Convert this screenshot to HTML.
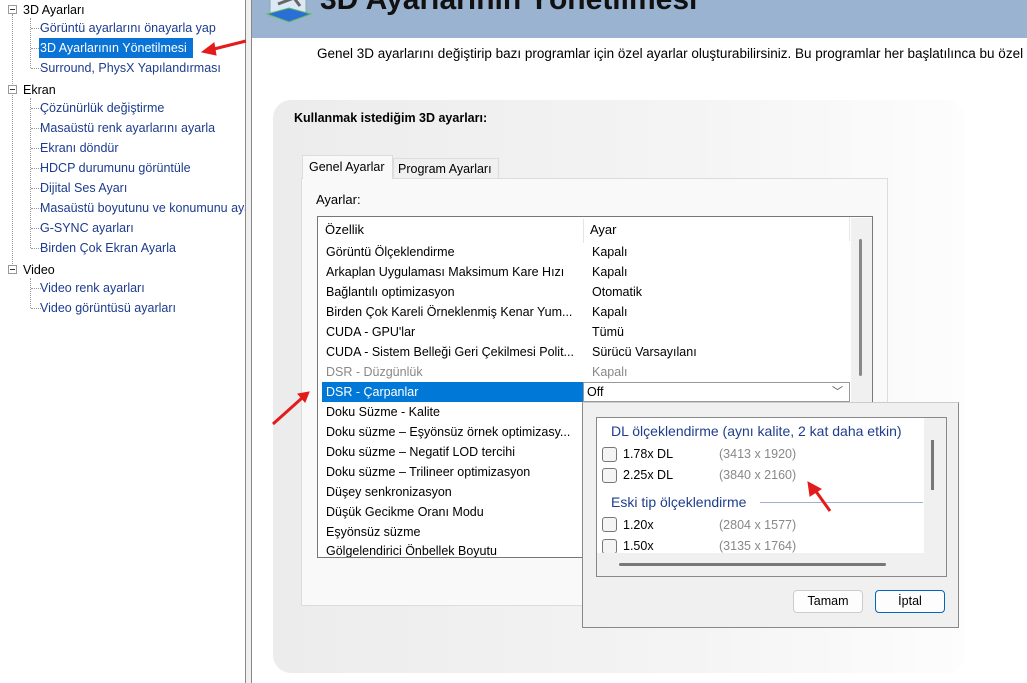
<!DOCTYPE html>
<html><head><meta charset="utf-8"><style>
*{margin:0;padding:0;box-sizing:border-box}
body{width:1027px;height:683px;overflow:hidden;background:#fff;font-family:"Liberation Sans","DejaVu Sans",sans-serif;font-size:12.5px;color:#000;position:relative}
.a{position:absolute;white-space:nowrap}
.tree .a{font-size:12.5px;line-height:20px}
.ch{color:#1d3c8f}
.dot{position:absolute;border-left:1px dotted #999}
.hd{position:absolute;border-top:1px dotted #999;width:10px}
.box{position:absolute;width:9px;height:9px;border:1px solid #999;background:#fff}
.box:after{content:"";position:absolute;left:1px;top:3px;width:5px;border-top:1px solid #333}
.row{position:absolute;left:326px;height:20px;line-height:20px;white-space:nowrap}
.cb{position:absolute;width:15px;height:15px;border:1px solid #777;border-radius:3px;background:#f4f4f4}
.res{color:#888;font-size:12.5px}
</style></head><body>
<div class="tree">
<div class="dot" style="left:12px;top:14px;height:256px"></div>
<div class="dot" style="left:30px;top:18px;height:50px"></div>
<div class="dot" style="left:30px;top:98px;height:150px"></div>
<div class="dot" style="left:30px;top:278px;height:30px"></div>
<div class="box" style="left:8px;top:5px"></div>
<div class="box" style="left:8px;top:85px"></div>
<div class="box" style="left:8px;top:265px"></div>
<div class="a" style="left:23px;top:0">3D Ayarları</div>
<div class="a" style="left:23px;top:80px">Ekran</div>
<div class="a" style="left:23px;top:260px">Video</div>
<div class="hd" style="left:31px;top:28px"></div><div class="a ch" style="left:40px;top:18px">Görüntü ayarlarını önayarla yap</div>
<div class="hd" style="left:31px;top:48px"></div><div class="a" style="left:39px;top:38px;background:#0a74d6;color:#fff;padding:0 3px 0 1px;width:154px">3D Ayarlarının Yönetilmesi</div>
<div class="hd" style="left:31px;top:68px"></div><div class="a ch" style="left:40px;top:58px">Surround, PhysX Yapılandırması</div>
<div class="hd" style="left:31px;top:108px"></div><div class="a ch" style="left:40px;top:98px">Çözünürlük değiştirme</div>
<div class="hd" style="left:31px;top:128px"></div><div class="a ch" style="left:40px;top:118px">Masaüstü renk ayarlarını ayarla</div>
<div class="hd" style="left:31px;top:148px"></div><div class="a ch" style="left:40px;top:138px">Ekranı döndür</div>
<div class="hd" style="left:31px;top:168px"></div><div class="a ch" style="left:40px;top:158px">HDCP durumunu görüntüle</div>
<div class="hd" style="left:31px;top:188px"></div><div class="a ch" style="left:40px;top:178px">Dijital Ses Ayarı</div>
<div class="hd" style="left:31px;top:208px"></div><div class="a ch" style="left:40px;top:198px;width:206px;overflow:hidden">Masaüstü boyutunu ve konumunu ayarla</div>
<div class="hd" style="left:31px;top:228px"></div><div class="a ch" style="left:40px;top:218px">G-SYNC ayarları</div>
<div class="hd" style="left:31px;top:248px"></div><div class="a ch" style="left:40px;top:238px">Birden Çok Ekran Ayarla</div>
<div class="hd" style="left:31px;top:288px"></div><div class="a ch" style="left:40px;top:278px">Video renk ayarları</div>
<div class="hd" style="left:31px;top:308px"></div><div class="a ch" style="left:40px;top:298px">Video görüntüsü ayarları</div>
</div>
<div class="a" style="left:245px;top:0;width:7px;height:683px;border-left:1px solid #888;border-right:1px solid #888;background:#f0f0f0"></div>
<div class="a" style="left:252px;top:0;width:775px;height:38px;background:#9ab3d1;overflow:hidden">
 <svg style="position:absolute;left:12px;top:-6px" width="50" height="30"><rect x="6" y="0" width="36" height="22" fill="#dde8f5" stroke="#8aa" /><polygon points="3,20 25,28 47,20 25,14" fill="#2a6fd6" stroke="#6b6"/><path d="M14 10 L30 4 L36 12" stroke="#666" stroke-width="3" fill="none"/></svg>
 <div class="a" style="left:68px;top:-17px;font-size:30px;font-weight:bold;color:#111">3D Ayarlarının Yönetilmesi</div>
</div>
<div class="a" style="left:317px;top:46px;font-size:13.5px">Genel 3D ayarlarını değiştirip bazı programlar için özel ayarlar oluşturabilirsiniz. Bu programlar her başlatılınca bu özel ayarlar</div>
<div class="a" style="left:273px;top:100px;width:692px;height:573px;border-radius:18px;background:linear-gradient(90deg,#ececec,#f4f4f4 60%,#fdfdfd)"></div>
<div class="a" style="left:294px;top:111px;font-weight:bold;font-size:12.5px">Kullanmak istediğim 3D ayarları:</div>
<div class="a" style="left:301px;top:178px;width:587px;height:428px;background:#f9f9f9;border:1px solid #dcdcdc"></div>
<div class="a" style="left:302px;top:155px;width:91px;height:24px;background:#f9f9f9;border:1px solid #dcdcdc;border-bottom:none;line-height:22px;padding-left:6px">Genel Ayarlar</div>
<div class="a" style="left:393px;top:158px;width:106px;height:20px;background:#f0f0f0;border:1px solid #dcdcdc;border-bottom:none;line-height:20px;padding-left:4px">Program Ayarları</div>
<div class="a" style="left:316px;top:192px;font-size:13px">Ayarlar:</div>
<div class="a" style="left:317px;top:216px;width:556px;height:342px;background:#fff;border:1px solid #777"></div>
<div class="a" style="left:325px;top:222px;font-size:13px">Özellik</div>
<div class="a" style="left:583px;top:219px;height:24px;border-left:1px solid #e5e5e5"></div>
<div class="a" style="left:590px;top:222px;font-size:13px">Ayar</div>
<div class="a" style="left:849px;top:217px;width:1px;height:24px;background:#e5e5e5"></div>
<div class="a" style="left:851px;top:218px;width:21px;height:338px;background:#f0f0f0"></div>
<div class="a" style="left:859px;top:239px;width:3px;height:137px;background:#888;border-radius:2px"></div>
<div class="a" style="left:318px;top:542px;width:533px;height:15px;overflow:hidden"><div class="a" style="left:8px;top:2px;line-height:14px">Gölgelendirici Önbellek Boyutu</div></div>
<div class="row" style="top:242px">Görüntü Ölçeklendirme</div><div class="row" style="left:592px;top:242px">Kapalı</div>
<div class="row" style="top:262px">Arkaplan Uygulaması Maksimum Kare Hızı</div><div class="row" style="left:592px;top:262px">Kapalı</div>
<div class="row" style="top:282px">Bağlantılı optimizasyon</div><div class="row" style="left:592px;top:282px">Otomatik</div>
<div class="row" style="top:302px">Birden Çok Kareli Örneklenmiş Kenar Yum...</div><div class="row" style="left:592px;top:302px">Kapalı</div>
<div class="row" style="top:322px">CUDA - GPU'lar</div><div class="row" style="left:592px;top:322px">Tümü</div>
<div class="row" style="top:342px">CUDA - Sistem Belleği Geri Çekilmesi Polit...</div><div class="row" style="left:592px;top:342px">Sürücü Varsayılanı</div>
<div class="row" style="top:362px;color:#888">DSR - Düzgünlük</div><div class="row" style="left:592px;top:362px;color:#888">Kapalı</div>
<div class="a" style="left:322px;top:382px;width:261px;height:20px;background:#0078d7"></div>
<div class="row" style="top:382px;color:#fff">DSR - Çarpanlar</div>
<div class="a" style="left:583px;top:382px;width:267px;height:20px;border:1px solid #999;background:#fff;line-height:18px;padding-left:3px">Off<span style="position:absolute;right:6px;top:0;color:#555;font-size:11px">﹀</span></div>
<div class="row" style="top:402px">Doku Süzme - Kalite</div>
<div class="row" style="top:422px">Doku süzme – Eşyönsüz örnek optimizasy...</div>
<div class="row" style="top:442px">Doku süzme – Negatif LOD tercihi</div>
<div class="row" style="top:462px">Doku süzme – Trilineer optimizasyon</div>
<div class="row" style="top:482px">Düşey senkronizasyon</div>
<div class="row" style="top:502px">Düşük Gecikme Oranı Modu</div>
<div class="row" style="top:522px">Eşyönsüz süzme</div>
<div class="a" style="left:582px;top:402px;width:377px;height:226px;background:#f0f0f0;border:1px solid #888;border-top:1px solid #ccc"></div>
<div class="a" style="left:596px;top:417px;width:351px;height:160px;border:1px solid #888;background:#f0f0f0"></div>
<div class="a" style="left:597px;top:418px;width:327px;height:135px;background:#fff"></div>
<div class="a" style="left:611px;top:423px;color:#1e3e8c;font-size:14px">DL ölçeklendirme (aynı kalite, 2 kat daha etkin)</div>
<div class="a" style="left:931px;top:440px;width:3px;height:50px;background:#777"></div>
<div class="cb" style="left:602px;top:447px"></div><div class="a" style="left:623px;top:447px">1.78x DL</div><div class="a res" style="left:719px;top:447px">(3413 x 1920)</div>
<div class="cb" style="left:602px;top:468px"></div><div class="a" style="left:623px;top:468px">2.25x DL</div><div class="a res" style="left:719px;top:468px">(3840 x 2160)</div>
<div class="a" style="left:611px;top:494px;color:#1e3e8c;font-size:14px">Eski tip ölçeklendirme</div>
<div class="a" style="left:760px;top:502px;width:163px;border-top:1px solid #9fb0d0"></div>
<div class="cb" style="left:602px;top:517px"></div><div class="a" style="left:623px;top:518px">1.20x</div><div class="a res" style="left:719px;top:518px">(2804 x 1577)</div>
<div class="a" style="left:597px;top:538px;width:327px;height:15px;overflow:hidden"><div class="cb" style="left:5px;top:1px"></div><div class="a" style="left:26px;top:1px">1.50x</div><div class="a res" style="left:122px;top:1px">(3135 x 1764)</div></div>
<div class="a" style="left:619px;top:563px;width:267px;height:3px;background:#777;border-radius:2px"></div>
<div class="a" style="left:793px;top:590px;width:70px;height:23px;border:1px solid #ccc;border-radius:4px;background:#fdfdfd;text-align:center;line-height:21px">Tamam</div>
<div class="a" style="left:875px;top:590px;width:70px;height:23px;border:1px solid #0067c0;border-radius:4px;background:#fdfdfd;text-align:center;line-height:21px">İptal</div>
<svg class="a" style="left:0;top:0" width="1027" height="683">
<g stroke="#e31b1b" stroke-width="3" fill="#e31b1b">
<line x1="246" y1="41" x2="210" y2="50"/><polygon points="202,52 214,43 216,55" stroke-width="1"/>
<line x1="273" y1="424" x2="302" y2="398"/><polygon points="309,392 298,394 305,402" stroke-width="1"/>
<line x1="830" y1="511" x2="815" y2="490"/><polygon points="808,482 810,496 821,489" stroke-width="1"/>
</g></svg>
</body></html>
